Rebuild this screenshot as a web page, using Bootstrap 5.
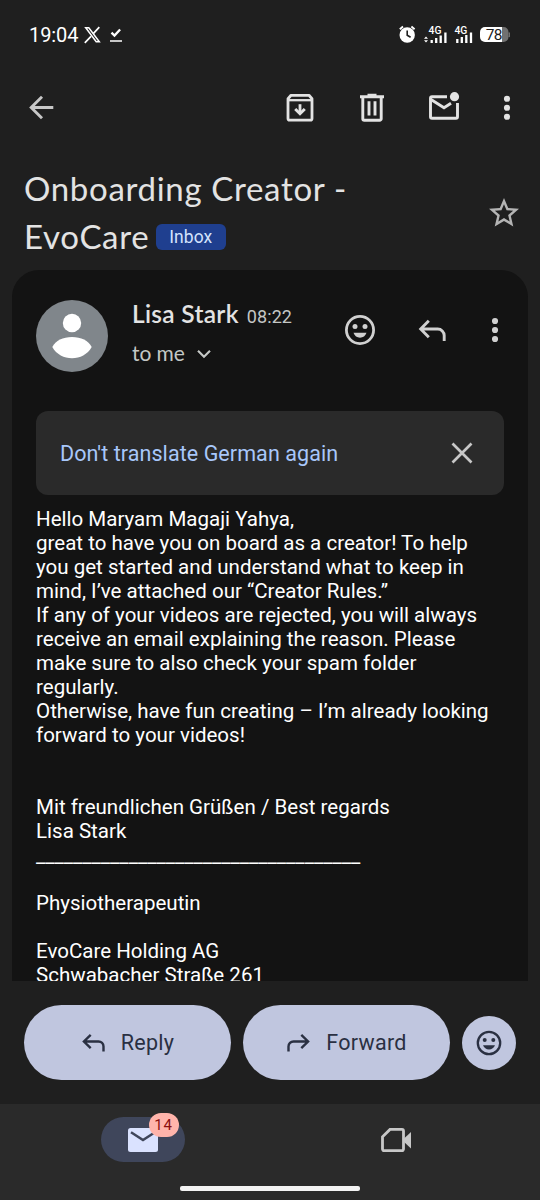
<!DOCTYPE html>
<html lang="en" data-bs-theme="dark">
<head>
<meta charset="utf-8">
<meta name="viewport" content="width=device-width, initial-scale=1">
<title>Onboarding Creator - EvoCare</title>
<link rel="stylesheet" href="https://cdn.jsdelivr.net/npm/bootstrap@5.3.0/dist/css/bootstrap.min.css">
<style>
  body { background: #1f1f1f; color: #e3e3e3; font-family: Roboto, sans-serif; }
  .screen { width: 540px; height: 1200px; }
  svg { display: block; flex: none; }
  .btn-icon { border: 0; padding: 0; color: inherit; background: none; line-height: 1; }
  .status { height: 68px; padding: 2px 30px 0 29px; color: #fff; }
  .clock { font-size: 20px; font-weight: 450; letter-spacing: -.1px; width: 50px; line-height: 24px; }
  .toolbar { height: 78px; padding: 0 15px 0 23px; }
  .subject { height: 124px; padding: 18px 18px 0 24px; }
  .subject h1 { font: 400 33px/48px Lato, sans-serif; letter-spacing: .68px; width: 350px; color: #e3e3e3; }
  .tag { font: 400 17.5px/26px Roboto, sans-serif; letter-spacing: .05px; background: #1f3f8f; color: #d3e3fd; border-radius: 6px; width: 70px; height: 26px; margin: 2px 0 0 6.5px; }
  .message { height: 711px; margin: 0 12px; padding: 30px 24px 0; background: #131313; border: 0; border-radius: 27px 27px 0 0; }
  .sender { height: 72px; }
  .sender-name { font: 600 24.5px/28px Lato, sans-serif; letter-spacing: .3px; color: #e3e3e3; }
  .sent-at { font: 400 18px/28px Roboto, sans-serif; color: #c4c7c5; letter-spacing: .1px; }
  .recipient { font: 400 21px/28px Lato, sans-serif; letter-spacing: -.1px; color: #c4c7c5; margin-top: 8px; }
  .translate { height: 84px; margin-top: 39px; padding: 0 24px; background: #2a2a2a; border-radius: 12px; color: #a8c7fa; font-size: 21.5px; letter-spacing: .07px; }
  .translate span { padding-top: 2px; }
  .mail-text { font-size: 20.54px; line-height: 24px; margin-top: 12px; color: #fff; white-space: pre; }
  .actions { height: 123px; padding: 0 24px; }
  .pill { width: 207px; height: 75px; border-radius: 38px; background: #c0c6df; color: #2a3042; font-size: 21.5px; letter-spacing: .3px; border: 0; }
  .pill span { padding-top: 1px; }
  .round { width: 54px; height: 54px; background: #c0c6df; color: #2a3042; border: 0; padding: 0; }
  .tabs { height: 96px; background: #2a2a2a; }
  .tab-pill { width: 84px; height: 45px; border-radius: 23px; background: #3f465b; }
  .count { position: absolute; left: 48px; top: -4px; width: 30px; height: 24px; border-radius: 12px; background: #ffb4ab; color: #8c1010; font: 400 15px/24px Roboto, sans-serif; letter-spacing: .8px; text-align: center; }
  .home-bar { width: 180px; height: 5px; border-radius: 2px; background: #f3f3f3; }
</style>
</head>
<body>
<div class="screen d-flex flex-column overflow-hidden">

  <div class="status d-flex align-items-center justify-content-between">
    <div class="d-flex align-items-center">
      <span class="clock">19:04</span>
      <svg class="ms-1" width="19" height="18" viewBox="0 0 19 18" fill="none" stroke="#fff"><path d="M2.700 1.800h3.100l10.500 14h-3.100z" stroke-width="1.500"/><path d="M16.300 1.200l-6 6.500M8 10.300l-6.200 6.500" stroke-width="1.700"/></svg>
      <svg style="margin-left:7px" width="14" height="16" viewBox="0 0 14 16" fill="none" stroke="#fff"><path d="M2.500 5.600l3 3 5.600-6.200" stroke-width="2.300"/><path d="M1 14h12" stroke-width="1.500"/></svg>
    </div>
    <div class="d-flex align-items-center">
      <svg width="112" height="20" viewBox="398 25 112 20">
        <g fill="none" stroke="#fff" stroke-width="1.900"><path d="M399.800 29.200l3.200-2.600M414.600 29.200l-3.200-2.600"/></g>
        <circle cx="407.200" cy="35" r="7.700" fill="#fff"/><path d="M407.200 30.500V35.300l3.400 2" fill="none" stroke="#1f1f1f" stroke-width="1.600"/>
        <g fill="#fff" font-family="Roboto, sans-serif" font-weight="500" font-size="10.300"><text x="428.600" y="33.500">4G</text><text x="454.400" y="33.500">4G</text></g>
        <path d="M424 38.700l2-2.300 2 2.300zM424 40.300l2 2.300 2-2.300z" fill="#fff"/>
        <path d="M431.700 43v-3M436.200 43v-5M440.700 43v-7.500M445.400 43V32.500M457.300 43v-4M461.800 43v-6M466.300 43v-8M471 43V32.500" fill="none" stroke="#fff" stroke-width="2.300"/>
        <path d="M501 27h2.500a5 5 0 0 1 5 5v5a5 5 0 0 1-5 5H501z" fill="#717171"/><path d="M509 32.500q1 2 0 4.500" stroke="#717171" fill="none" stroke-width="1.500"/>
        <path d="M485 27h17v15h-17a5 5 0 0 1-5-5v-5a5 5 0 0 1 5-5z" fill="#fff"/>
        <text x="485.800" y="40" font-family="Roboto, sans-serif" font-size="15.500" fill="#1b1b1b" letter-spacing="-.7">78</text>
      </svg>
    </div>
  </div>

  <div class="toolbar d-flex align-items-center">
    <button class="btn-icon me-auto" aria-label="Back"><svg width="36" height="36" viewBox="0 0 36 36" fill="none" stroke="#c7c7c7" stroke-width="2.900"><path d="M30.300 18.500H8.500M19 7.700L8.200 18.500l10.800 10.800"/></svg></button>
    <button class="btn-icon" aria-label="Archive"><svg width="36" height="36" viewBox="0 0 36 36" fill="none" stroke="#e3e3e3" stroke-width="2.800"><path d="M9 6.300h18l3 3.400V29.500a1.700 1.700 0 0 1-1.700 1.700H7.700A1.700 1.700 0 0 1 6 29.500V9.700z" stroke-linejoin="round"/><path d="M6 11.200h24" stroke-width="2.300"/><path d="M18 15.200v9"/><path d="M13.200 20l4.800 4.800 4.800-4.800" stroke-width="2.900"/></svg></button>
    <button class="btn-icon" style="margin-left:36px" aria-label="Delete"><svg width="36" height="36" viewBox="0 0 36 36" fill="none" stroke="#e3e3e3" stroke-width="2.900"><path d="M6 7.800h24M13.500 6.300h9"/><path d="M8.800 8v21.700a1.500 1.500 0 0 0 1.500 1.500h15.400a1.500 1.500 0 0 0 1.500-1.500V8M15 12.300v14.200M21 12.300v14.200"/></svg></button>
    <button class="btn-icon" style="margin-left:36px" aria-label="Mark unread"><svg width="36" height="36" viewBox="0 0 36 36" fill="none" stroke="#e3e3e3" stroke-width="2.900"><path d="M21 7.700H6a1.500 1.500 0 0 0-1.500 1.500v18.600A1.500 1.500 0 0 0 6 29.300h24a1.500 1.500 0 0 0 1.500-1.500V14"/><path d="M5 10.500l13 8.300 7-4.600"/><circle cx="28.500" cy="7.700" r="4.600" fill="#e3e3e3" stroke="none"/></svg></button>
    <button class="btn-icon" style="margin-left:27px" aria-label="More"><svg width="36" height="36" viewBox="0 0 24 24" fill="#e3e3e3"><circle cx="12" cy="6.500" r="2.050"/><circle cx="12" cy="12.500" r="2.050"/><circle cx="12" cy="18.500" r="2.050"/></svg></button>
  </div>

  <div class="subject d-flex justify-content-between">
    <h1 class="m-0">Onboarding Creator - <span class="d-flex align-items-center">EvoCare<span class="tag text-center">Inbox</span></span></h1>
    <button class="btn-icon align-self-start" style="margin-top:31px" aria-label="Star"><svg width="36" height="36" viewBox="0 0 24 24" fill="#b4b4b4"><path d="M22 9.240l-7.190-.62L12 2 9.190 8.630 2 9.240l5.460 4.730L5.820 21 12 17.270 18.180 21l-1.630-7.030L22 9.240zM12 15.400l-3.760 2.270 1-4.280-3.320-2.880 4.380-.38L12 6.100l1.710 4.040 4.380.38-3.320 2.880 1 4.280L12 15.400z"/></svg></button>
  </div>

  <main class="message card overflow-hidden">
    <div class="sender d-flex flex-shrink-0">
      <svg width="72" height="72" viewBox="0 0 72 72"><circle cx="36" cy="36" r="36" fill="#80868b"/><circle cx="36" cy="23" r="9.200" fill="#fff"/><path d="M16.300 47C19.500 40.500 27 37 36 37s16.500 3.500 19.700 10C51.500 54.500 44 58.200 36 58.200S20.500 54.500 16.300 47z" fill="#fff"/></svg>
      <div class="flex-grow-1" style="margin-left:24px">
        <div class="sender-name d-flex align-items-baseline">Lisa Stark<span class="sent-at ms-2">08:22</span></div>
        <div class="recipient d-flex align-items-center">to me<svg style="margin-left:12px" width="14" height="14" viewBox="0 0 14 14" fill="none" stroke="#c4c7c5" stroke-width="2.200"><path d="M1 4.800l6 6 6-6"/></svg></div>
      </div>
      <div class="d-flex align-items-center" style="height:60px;margin-right:-9px">
        <button class="btn-icon" aria-label="React"><svg width="36" height="36" viewBox="0 0 36 36"><circle cx="18" cy="18" r="13.600" fill="none" stroke="#d0d0d0" stroke-width="2.800"/><g fill="#d0d0d0"><circle cx="13" cy="14.500" r="2.500"/><circle cx="23" cy="14.500" r="2.500"/><path d="M11.500 20.800h13C23.500 24 21 25.700 18 25.700s-5.500-1.700-6.500-4.900z"/></g></svg></button>
        <button class="btn-icon" style="margin-left:36px" aria-label="Reply"><svg width="36" height="36" viewBox="0 0 36 36" fill="none" stroke="#d0d0d0" stroke-width="2.900"><path d="M30.200 29v-5.500a6.500 6.500 0 0 0-6.500-6.500H7.500M14.800 8.700L6.700 17l8.100 8.200"/></svg></button>
        <button class="btn-icon" style="margin-left:27px" aria-label="More"><svg width="36" height="36" viewBox="0 0 24 24" fill="#d0d0d0"><circle cx="12" cy="6" r="2.050"/><circle cx="12" cy="12" r="2.050"/><circle cx="12" cy="18" r="2.050"/></svg></button>
      </div>
    </div>

    <div class="translate d-flex align-items-center justify-content-between flex-shrink-0">
      <span>Don't translate German again</span>
      <button class="btn-icon" aria-label="Close"><svg width="36" height="36" viewBox="0 0 36 36" fill="none" stroke="#c7c7c7" stroke-width="2.700"><path d="M8.500 8.500l19 19M27.500 8.500l-19 19"/></svg></button>
    </div>

    <div class="mail-text">Hello Maryam Magaji Yahya,
great to have you on board as a creator! To help
you get started and understand what to keep in
mind, I’ve attached our “Creator Rules.”
If any of your videos are rejected, you will always
receive an email explaining the reason. Please
make sure to also check your spam folder
regularly.
Otherwise, have fun creating – I’m already looking
forward to your videos!


Mit freundlichen Grüßen / Best regards
Lisa Stark
___________________________________

Physiotherapeutin

EvoCare Holding AG
Schwabacher Straße 261</div>
  </main>

  <div class="actions d-flex align-items-center justify-content-between">
    <button class="pill d-flex align-items-center justify-content-center p-0"><svg style="margin-right:15px" width="25" height="24" viewBox="0 0 25 24" fill="none" stroke="currentColor" stroke-width="2.400"><path d="M22.500 20.500v-5a5 5 0 0 0-5-5H3.500M9.700 3.800L2.900 10.500l6.800 6.700"/></svg><span>Reply</span></button>
    <button class="pill d-flex align-items-center justify-content-center p-0"><svg style="margin-right:15px" width="25" height="24" viewBox="0 0 25 24" fill="none" stroke="currentColor" stroke-width="2.400"><path d="M2.500 20.500v-5a5 5 0 0 1 5-5H21.500M15.300 3.800l6.800 6.700-6.800 6.700"/></svg><span>Forward</span></button>
    <button class="round rounded-circle d-flex align-items-center justify-content-center" aria-label="React"><svg width="30" height="30" viewBox="3 3 30 30"><circle cx="18" cy="18" r="11.200" fill="none" stroke="currentColor" stroke-width="2.300"/><g fill="currentColor"><circle cx="13.700" cy="15" r="2"/><circle cx="22.300" cy="15" r="2"/><path d="M12 20.300h12C23 23 20.800 24.500 18 24.500S13 23 12 20.300z"/></g></svg></button>
  </div>

  <nav class="tabs d-flex flex-column align-items-center">
    <div class="d-flex w-100" style="padding:13px 18px 0 16px">
      <div class="w-50 d-flex justify-content-center">
        <div class="tab-pill position-relative d-flex align-items-center justify-content-center">
          <svg width="30" height="24" viewBox="0 0 30 24"><rect width="30" height="24" rx="2.500" fill="#dae2ff"/><path d="M3 4.200l12 7.800 12-7.800" fill="none" stroke="#3f465b" stroke-width="2.500"/></svg>
          <span class="count">14</span>
        </div>
      </div>
      <div class="w-50 d-flex align-items-center justify-content-center" style="height:45px">
        <svg width="30" height="24" viewBox="0 0 30 24"><path d="M9 1.400H21a1.500 1.500 0 0 1 1.500 1.500v18.200a1.500 1.500 0 0 1-1.500 1.500H3a1.500 1.500 0 0 1-1.500-1.500V8.800z" fill="none" stroke="#c7c7c7" stroke-width="2.800"/><path d="M22.500 11L30 4v16.500l-7.500-7z" fill="#c7c7c7"/></svg>
      </div>
    </div>
    <div class="home-bar" style="margin-top:24px"></div>
  </nav>
</div>
<script src="https://cdn.jsdelivr.net/npm/bootstrap@5.3.0/dist/js/bootstrap.bundle.min.js"></script>
</body>
</html>
